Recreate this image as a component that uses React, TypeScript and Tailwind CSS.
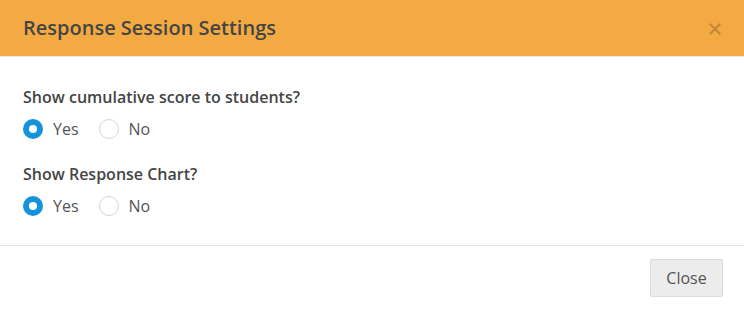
import { useState } from "react";

// Single radio option: round bubble + label text.
function Radio({ label, checked, onSelect }: { label: string; checked: boolean; onSelect: () => void }) {
  return (
    <label className="flex items-center cursor-pointer" onClick={onSelect}>
      {checked ? (
        <span className="w-[20px] h-[20px] rounded-full bg-[#1593da] flex items-center justify-center">
          <span className="w-[8px] h-[8px] rounded-full bg-white" />
        </span>
      ) : (
        <span className="w-[20px] h-[20px] rounded-full border border-[#d6d6d6] bg-white" />
      )}
      <span className="ml-[10px] text-[16px] leading-[20px] text-[#555]">{label}</span>
    </label>
  );
}

// A question with Yes / No choice.
function YesNo({ question, value, onChange }: { question: string; value: boolean; onChange: (v: boolean) => void }) {
  return (
    <div>
      <p className="text-[16px] font-semibold text-[#454545] leading-[22px]">{question}</p>
      <div className="flex items-center gap-[20px] mt-[11px]">
        <Radio label="Yes" checked={value} onSelect={() => onChange(true)} />
        <Radio label="No" checked={!value} onSelect={() => onChange(false)} />
      </div>
    </div>
  );
}

export default function App() {
  const [showScore, setShowScore] = useState(true);
  const [showChart, setShowChart] = useState(true);

  return (
    <div className="w-[744px] h-[310px] bg-white font-['Open_Sans',sans-serif] flex flex-col">
      {/* Header */}
      <div className="h-[57px] bg-[#f4aa42] flex items-center justify-between pl-[23px] pr-[23px] border-b border-[#e8e8e8]">
        <h2 className="text-[20px] font-semibold text-[#454545]">Response Session Settings</h2>
        <button className="text-black/20 mt-[1px]">
          <svg width="12" height="12" viewBox="0 0 12 12">
            <path d="M1.5 1.5 L10.5 10.5 M10.5 1.5 L1.5 10.5" stroke="currentColor" strokeWidth="2.4" strokeLinecap="round" />
          </svg>
        </button>
      </div>

      {/* Body */}
      <div className="px-[23px] pt-[29px] pb-[29px] flex flex-col gap-[24px] border-b border-[#e5e5e5]">
        <YesNo question="Show cumulative score to students?" value={showScore} onChange={setShowScore} />
        <YesNo question="Show Response Chart?" value={showChart} onChange={setShowChart} />
      </div>

      {/* Footer */}
      <div className="flex justify-end pr-[21px] pt-[13px]">
        <button className="w-[73px] h-[38px] bg-[#ececec] border border-[#dcdcdc] rounded-[2px] text-[16px] text-[#555]">
          Close
        </button>
      </div>
    </div>
  );
}
